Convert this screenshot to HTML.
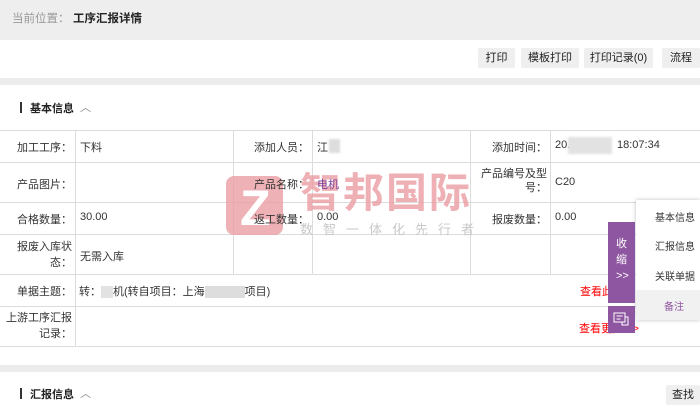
<!DOCTYPE html>
<html><head><meta charset="utf-8"><style>
*{margin:0;padding:0;box-sizing:border-box}
body{width:700px;height:413px;overflow:hidden;background:#fff;font-family:"Liberation Sans","Noto Sans CJK SC",sans-serif;font-size:11px;color:#333;position:relative}
.abs{position:absolute}
.top{left:0;top:0;width:700px;height:40px;background:#eeeeee}
.btn{top:48px;height:20px;background:#efefef;border-radius:2px;font-size:11px;line-height:20px;text-align:center;color:#222}
.strip{left:0;width:700px;height:7px;background:#ececec}
.hl{left:0;width:700px;height:1px;background:#dcdcdc}
.vl{width:1px;background:#dcdcdc}
.t{font-size:11px;color:#333;white-space:nowrap}
.r{text-align:right}
.blur{background:#ddd;filter:blur(1px)}
</style></head><body>
<div class="abs top"></div>
<div class="abs t" style="left:12px;top:10px;color:#999;font-size:11.5px">当前位置：</div>
<div class="abs t" style="left:73px;top:10px;font-weight:bold;color:#222;font-size:11.5px">工序汇报详情</div>

<div class="abs btn" style="left:478px;width:37px">打印</div>
<div class="abs btn" style="left:521px;width:58px">模板打印</div>
<div class="abs btn" style="left:584px;width:69px">打印记录(0)</div>
<div class="abs btn" style="left:662px;width:38px">流程</div>

<div class="abs strip" style="top:78px"></div>
<div class="abs" style="left:20px;top:102px;width:2px;height:11px;background:#333"></div>
<div class="abs t" style="left:30px;top:100px;font-weight:bold;color:#222">基本信息</div>
<div class="abs t" style="left:80px;top:99px;color:#888">︿</div>

<div class="abs hl" style="top:130px"></div>
<div class="abs hl" style="top:162px"></div>
<div class="abs hl" style="top:202px"></div>
<div class="abs hl" style="top:234px"></div>
<div class="abs hl" style="top:274px"></div>
<div class="abs hl" style="top:306px"></div>
<div class="abs hl" style="top:346px"></div>
<div class="abs vl" style="left:75px;top:130px;height:216px"></div>
<div class="abs vl" style="left:233px;top:130px;height:144px"></div>
<div class="abs vl" style="left:312px;top:130px;height:144px"></div>
<div class="abs vl" style="left:470px;top:130px;height:144px"></div>
<div class="abs vl" style="left:550px;top:130px;height:144px"></div>

<!-- watermark -->
<div class="abs" style="left:226px;top:176px;width:57px;height:59px;background:#ea9ea3;border-radius:8px;opacity:.8"></div>
<div class="abs" style="left:240px;top:186px;font-size:50px;line-height:44px;font-weight:bold;color:#fff;font-family:'Liberation Sans',sans-serif">Z</div>
<div class="abs t" style="left:300px;top:170px;font-size:41px;line-height:46px;color:#eb9da2;opacity:.8;letter-spacing:2px;font-weight:bold">智邦国际</div>
<div class="abs t" style="left:300px;top:219px;font-size:13px;color:#c8c8c8;letter-spacing:10px">数智一体化先行者</div>

<div class="abs t r" style="left:0;width:72px;top:139px">加工工序：</div>
<div class="abs t" style="left:80px;top:139px">下料</div>
<div class="abs t r" style="left:234px;width:75px;top:139px">添加人员：</div>
<div class="abs t" style="left:317px;top:139px">江</div>
<div class="abs blur" style="left:329px;top:139px;width:11px;height:14px"></div>
<div class="abs t r" style="left:470px;width:77px;top:139px">添加时间：</div>
<div class="abs t" style="left:555px;top:139px">20.</div>
<div class="abs blur" style="left:568px;top:137px;width:44px;height:17px;background:#e2e2e2"></div>
<div class="abs t" style="left:617px;top:139px">18:07:34</div>

<div class="abs t r" style="left:0;width:72px;top:176px">产品图片：</div>
<div class="abs t r" style="left:234px;width:75px;top:176px">产品名称：</div>
<div class="abs t" style="left:317px;top:176px;color:#7a3e9a">电机</div>
<div class="abs t r" style="left:470px;width:77px;top:167px;line-height:14px">产品编号及型<br>号：</div>
<div class="abs t" style="left:555px;top:176px">C20</div>

<div class="abs t r" style="left:0;width:72px;top:211px">合格数量：</div>
<div class="abs t" style="left:80px;top:211px">30.00</div>
<div class="abs t r" style="left:234px;width:75px;top:211px">返工数量：</div>
<div class="abs t" style="left:317px;top:211px">0.00</div>
<div class="abs t r" style="left:470px;width:77px;top:211px">报废数量：</div>
<div class="abs t" style="left:555px;top:211px">0.00</div>

<div class="abs t r" style="left:0;width:72px;top:239px;line-height:16px">报废入库状<br>态：</div>
<div class="abs t" style="left:80px;top:248px">无需入库</div>

<div class="abs t r" style="left:0;width:72px;top:283px">单据主题：</div>
<div class="abs t" style="left:79px;top:283px">转：<span style="display:inline-block;width:12px;height:12px;background:#e2e2e2;vertical-align:middle"></span>机(转自项目：上海<span style="display:inline-block;width:40px;height:12px;background:#ddd;vertical-align:middle"></span>项目)</div>
<div class="abs t" style="left:580px;top:283px;color:#f00">查看此</div>

<div class="abs t r" style="left:0;width:72px;top:310px;line-height:16px">上游工序汇报<br>记录：</div>
<div class="abs t" style="left:579px;top:320px;color:#f00">查看更多 &gt;&gt;</div>

<div class="abs strip" style="top:365px"></div>
<div class="abs" style="left:20px;top:388px;width:2px;height:11px;background:#333"></div>
<div class="abs t" style="left:30px;top:386px;font-weight:bold;color:#222">汇报信息</div>
<div class="abs t" style="left:80px;top:385px;color:#888">︿</div>
<div class="abs btn" style="left:666px;top:385px;width:34px">查找</div>

<!-- side panel -->
<div class="abs" style="left:636px;top:200px;width:64px;height:120px;background:#fff;box-shadow:0 0 4px rgba(0,0,0,.25)"></div>
<div class="abs" style="left:636px;top:290px;width:64px;height:30px;background:#f1f1f1"></div>
<div class="abs t" style="left:655px;top:209px;font-size:10px">基本信息</div>
<div class="abs t" style="left:655px;top:238px;font-size:10px">汇报信息</div>
<div class="abs t" style="left:655px;top:268px;font-size:10px">关联单据</div>
<div class="abs t" style="left:664px;top:298px;font-size:10px;color:#8e55a0">备注</div>
<div class="abs" style="left:608px;top:222px;width:27px;height:81px;background:#8e55a0"></div>
<div class="abs t" style="left:616px;top:236px;color:#fff;line-height:16px">收<br>缩<br>&gt;&gt;</div>
<div class="abs" style="left:608px;top:306px;width:27px;height:27px;background:#8e55a0"></div>
<svg class="abs" style="left:613px;top:312px" width="17" height="15" viewBox="0 0 17 15" fill="none" stroke="#fff" stroke-width="1"><rect x="1" y="1" width="11" height="9"/><path d="M3.5 4h6M3.5 7h4M12 5h3v8h-6v-3"/></svg>
</body></html>
